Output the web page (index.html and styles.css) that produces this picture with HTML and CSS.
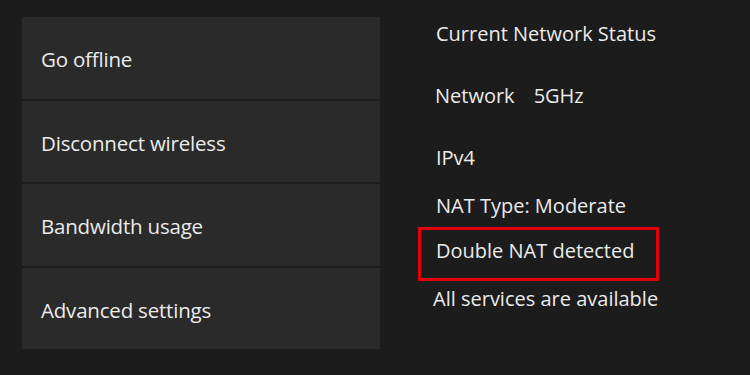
FILE: index.html
```html
<!DOCTYPE html>
<html lang="en">
<head>
    <meta charset="UTF-8">
    <meta name="viewport" content="width=device-width, initial-scale=1.0">
    <title>Network settings</title>
    <link rel="stylesheet" href="styles.css">
</head>
<body>
    <div class="menu">
        <div class="tile">Go offline</div>
        <div class="tile">Disconnect wireless</div>
        <div class="tile">Bandwidth usage</div>
        <div class="tile">Advanced settings</div>
    </div>

    <div class="status">
        <div class="row title">Current Network Status</div>
        <div class="row net"><span>Network</span><span class="band">5GHz</span></div>
        <div class="row ip">IPv4</div>
        <div class="row nat">NAT Type: Moderate</div>
        <div class="row double">Double NAT detected</div>
        <div class="row services">All services are available</div>
    </div>
</body>
</html>
```

FILE: styles.css
```css
body {
    margin: 0;
    height: 375px;
    display: flex;
    background-color: #1c1c1c;
    color: #ebebeb;
    font-family: "Open Sans", "Noto Sans", sans-serif;
    overflow: hidden;
}

.menu {
    display: flex;
    flex-direction: column;
    gap: 2px;
    width: 358px;
    padding: 17px 0 0 22px;
}

.tile {
    display: flex;
    align-items: center;
    height: 81.5px;
    padding-left: 19px;
    padding-top: 3px;
    box-sizing: border-box;
    background-color: #2a2a2a;
    font-size: 20.5px;
    letter-spacing: -0.2px;
}

.status {
    margin-left: 38px;
    padding-top: 22px;
    width: 250px;
    font-size: 20px;
}

.row {
    line-height: 24px;
    padding-left: 18px;
}

.net {
    margin-top: 37.5px;
    padding-left: 17px;
}

.band {
    margin-left: 19px;
}

.ip {
    margin-top: 38px;
}

.nat {
    margin-top: 24px;
}

.double {
    width: 241px;
    box-sizing: border-box;
    margin-top: 9.5px;
    padding: 9px 0 15px 15px;
    border: 3px solid #e4000b;
}

.services {
    margin-top: 5.5px;
    padding-left: 15px;
}
```
